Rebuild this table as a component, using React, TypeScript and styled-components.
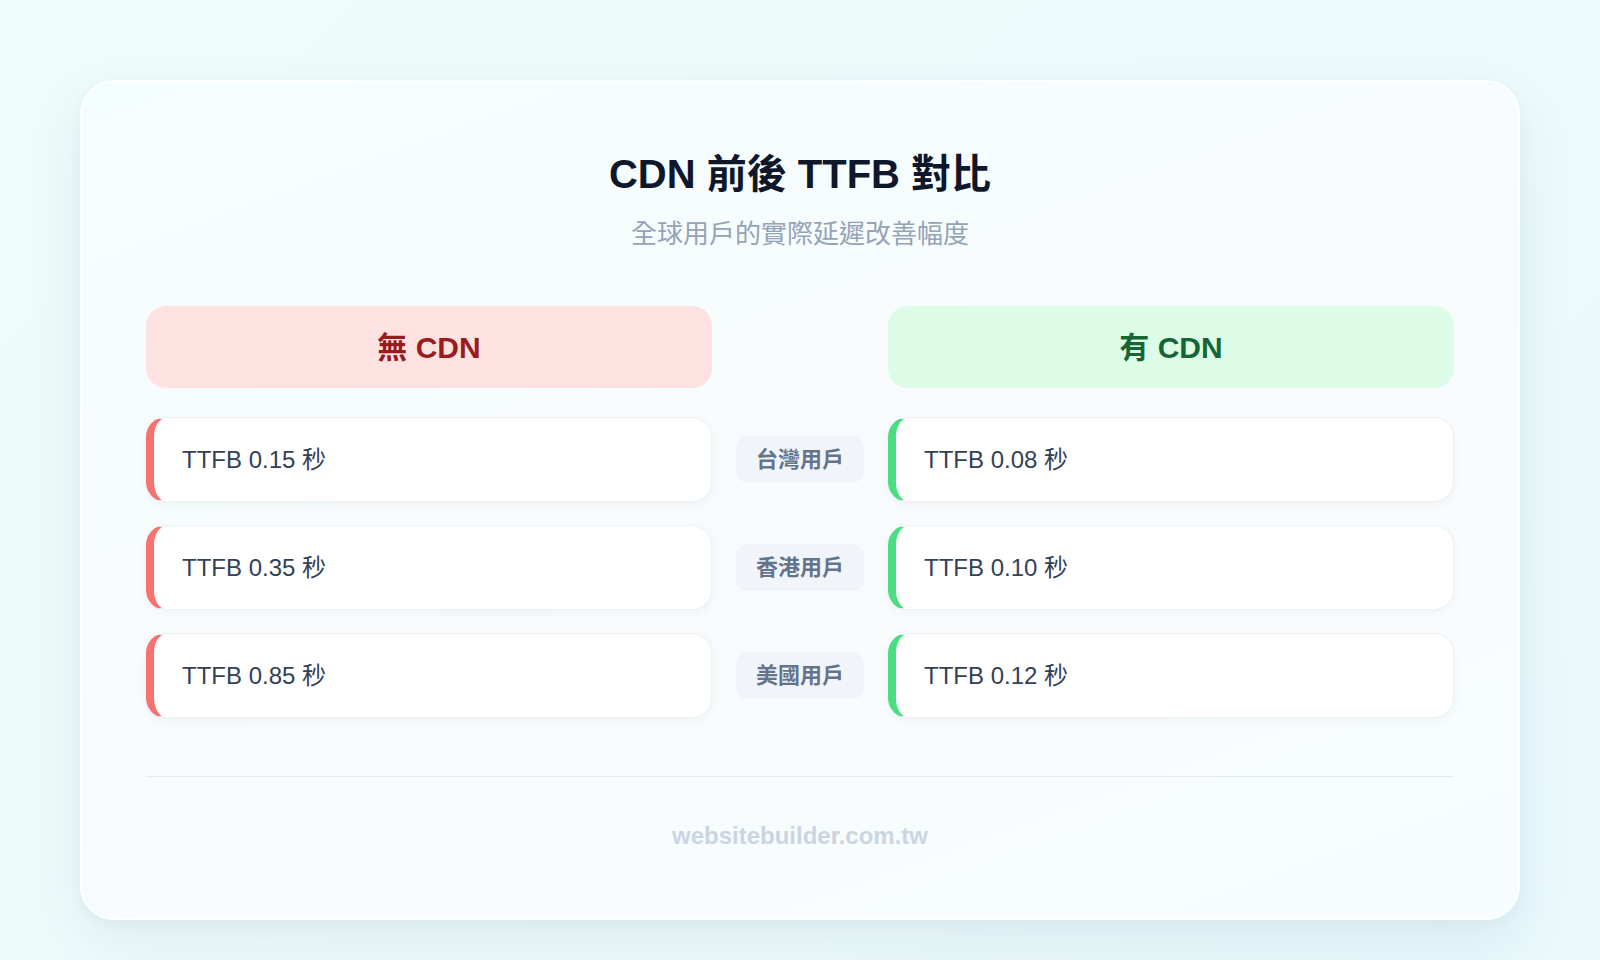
import React from "react";
import styled, { createGlobalStyle } from "styled-components";

const GlobalStyle = createGlobalStyle`
  * { box-sizing: border-box; }
  html, body { margin: 0; padding: 0; }
  body {
    font-family: "Liberation Sans", "Noto Sans CJK TC", sans-serif;
    background: linear-gradient(135deg, #eefcfb 0%, #eefbfc 45%, #e9f9fc 100%);
    min-height: 960px;
  }
`;

const Page = styled.div`
  padding: 80px 80px 40px;
`;

const Card = styled.div`
  border: 2px solid rgba(255, 255, 255, 0.7);
  border-radius: 34px;
  padding: 64px 64px;
  background: linear-gradient(160deg, #f5fefe 0%, #f8fbfd 50%, #f7fdfe 100%);
  box-shadow: 0 24px 60px rgba(20, 80, 100, 0.08), 0 4px 14px rgba(20, 80, 100, 0.04);
`;

const Title = styled.h1`
  margin: 0;
  text-align: center;
  font-size: 40px;
  line-height: 56px;
  font-weight: 700;
  color: #0f172a;
`;

const Subtitle = styled.p`
  margin: 14px 0 0;
  text-align: center;
  font-size: 26px;
  line-height: 36px;
  color: #94a3b8;
`;

const Grid = styled.div`
  margin-top: 54px;
  display: grid;
  grid-template-columns: 1fr auto 1fr;
  column-gap: 24px;
  row-gap: 23px;
  align-items: center;
`;

const Header = styled.div<{ $tone: "bad" | "good" }>`
  height: 82px;
  padding-bottom: 4px;
  border-radius: 20px;
  display: flex;
  align-items: center;
  justify-content: center;
  font-size: 30px;
  font-weight: 700;
  background: ${(p) => (p.$tone === "bad" ? "#fee2e2" : "#dcfce7")};
  color: ${(p) => (p.$tone === "bad" ? "#991b1b" : "#166534")};
  margin-bottom: 6px;
`;

const Spacer = styled.div``;

const Metric = styled.div<{ $tone: "bad" | "good" }>`
  height: 85px;
  display: flex;
  align-items: center;
  padding-left: 28px;
  padding-bottom: 5px;
  background: #ffffff;
  border: 1px solid #eef1f4;
  border-left: 8px solid ${(p) => (p.$tone === "bad" ? "#f87171" : "#4ade80")};
  border-radius: 20px;
  box-shadow: 0 3px 10px rgba(15, 23, 42, 0.04);
  font-size: 24px;
  color: #334155;
`;

const Region = styled.div`
  justify-self: center;
  padding: 7px 20px;
  border-radius: 12px;
  background: #f1f5f9;
  color: #64748b;
  font-size: 22px;
  line-height: 33px;
  font-weight: 700;
  white-space: nowrap;
`;

const Footer = styled.div`
  margin-top: 58px;
  border-top: 1px solid #e5eaf0;
  padding-top: 41px;
  text-align: center;
  font-size: 24px;
  line-height: 36px;
  font-weight: 700;
  color: #cbd5e1;
`;

const rows = [
  { region: "台灣用戶", before: "0.15", after: "0.08" },
  { region: "香港用戶", before: "0.35", after: "0.10" },
  { region: "美國用戶", before: "0.85", after: "0.12" },
];

export default function App() {
  return (
    <>
      <GlobalStyle />
      <Page>
        <Card>
          <Title>CDN 前後 TTFB 對比</Title>
          <Subtitle>全球用戶的實際延遲改善幅度</Subtitle>
          <Grid>
            <Header $tone="bad">無 CDN</Header>
            <Spacer />
            <Header $tone="good">有 CDN</Header>
            {rows.map((r) => (
              <React.Fragment key={r.region}>
                <Metric $tone="bad">TTFB {r.before} 秒</Metric>
                <Region>{r.region}</Region>
                <Metric $tone="good">TTFB {r.after} 秒</Metric>
              </React.Fragment>
            ))}
          </Grid>
          <Footer>websitebuilder.com.tw</Footer>
        </Card>
      </Page>
    </>
  );
}
